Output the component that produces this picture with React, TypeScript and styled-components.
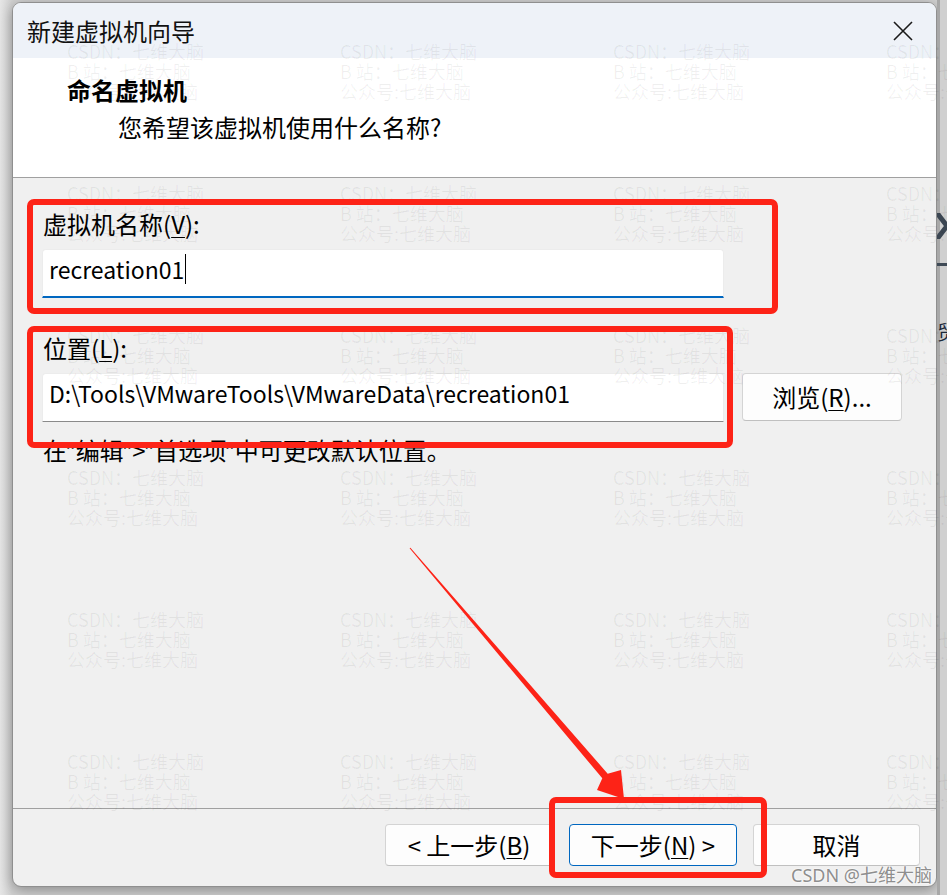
import React from 'react'
import styled, { createGlobalStyle } from 'styled-components'

const GlobalStyle = createGlobalStyle`
  html, body {
    margin: 0;
    padding: 0;
    background: #d6d6d6;
    overflow: hidden;
  }
  * {
    box-sizing: border-box;
  }
`

const FONT = `"Noto Sans CJK SC", "Noto Sans", sans-serif`
const RED = '#fd2317'

const Desktop = styled.div`
  position: relative;
  width: 947px;
  height: 895px;
  display: flex;
  padding: 2px 0 0 12px;
  background: linear-gradient(90deg, #e6e6e6 0px, #d2d2d2 12px);
  font-family: ${FONT};
  color: #000;
  overflow: hidden;
`

const Dialog = styled.div`
  width: 925px;
  height: 885px;
  flex-shrink: 0;
  display: flex;
  flex-direction: column;
  border: 1px solid #8f8f8f;
  border-radius: 9px;
  overflow: hidden;
  background: #f0f0f0;
  box-shadow: 0 3px 14px rgba(0, 0, 0, 0.35);
`

const TitleBar = styled.div`
  height: 55px;
  flex-shrink: 0;
  display: flex;
  align-items: center;
  justify-content: space-between;
  padding: 0 23px 0 14px;
  background: #eef2f8;
`

const TitleText = styled.div`
  font-size: 24px;
  line-height: 30px;
  color: #111;
`

const CloseButton = styled.div`
  width: 20px;
  height: 20px;
  display: flex;
`

const Header = styled.div`
  height: 120px;
  flex-shrink: 0;
  padding: 17px 0 0 54px;
  background: #fff;
  border-bottom: 1px solid #a0a0a0;
`

const HeaderTitle = styled.div`
  font-size: 24px;
  line-height: 30px;
  font-weight: 700;
`

const HeaderSub = styled.div`
  margin: 7px 0 0 51px;
  font-size: 24px;
  line-height: 30px;
`

const Body = styled.div`
  flex: 1;
  padding: 31px 0 0 29px;
  border-bottom: 1px solid #a0a0a0;
`

const FieldLabel = styled.div<{ $gap?: number }>`
  margin-top: ${({ $gap }) => $gap ?? 0}px;
  margin-bottom: 10px;
  font-size: 24px;
  line-height: 30px;
  padding-left: 1px;
`

const Key = styled.span`
  text-decoration: underline;
  text-underline-offset: 3px;
  text-decoration-thickness: 1px;
`

const Quote = styled.span`
  font-family: "Noto Sans", sans-serif;
`

const FieldRow = styled.div`
  display: flex;
  align-items: flex-start;
  gap: 18px;
`

const TextBox = styled.div<{ $focused?: boolean }>`
  width: 682px;
  height: 49px;
  display: flex;
  align-items: flex-start;
  padding: 4px 6px 0;
  background: #fff;
  border: 1px solid #ececec;
  border-bottom: ${({ $focused }) => ($focused ? '2px solid #0067c0' : '1px solid #8a8a8a')};
  border-radius: 4px 4px 0 0;
  font-size: 23px;
  line-height: 30px;
  white-space: nowrap;
`

const Caret = styled.span`
  display: inline-block;
  width: 1px;
  height: 30px;
  margin-left: 1px;
  background: #000;
`

const PushButton = styled.div<{ $primary?: boolean; $width: number; $height: number }>`
  width: ${({ $width }) => $width}px;
  height: ${({ $height }) => $height}px;
  flex-shrink: 0;
  display: flex;
  align-items: center;
  justify-content: center;
  background: #fdfdfd;
  border: 1px solid ${({ $primary }) => ($primary ? '#0067c0' : '#d4d4d4')};
  border-bottom-color: ${({ $primary }) => ($primary ? '#0067c0' : '#c0c0c0')};
  border-radius: 4px;
  font-size: 24px;
  line-height: 30px;
  white-space: pre;
`

const Hint = styled.div`
  margin-top: 13px;
  font-size: 24px;
  line-height: 30px;
  padding-left: 1px;
`

const Footer = styled.div`
  height: 77px;
  flex-shrink: 0;
  display: flex;
  justify-content: flex-end;
  align-items: flex-start;
  gap: 16px;
  padding: 15px 16px 0 0;
`

const BackWindow = styled.div`
  flex: 1;
  min-width: 0;
  overflow: hidden;
  display: flex;
  flex-direction: column;
  align-items: flex-start;
  margin-top: -2px;
  padding-top: 213px;
  background: linear-gradient(90deg, #a8a8a8 0px, #a8a8a8 3px, #d0d0d0 3px);
`

const BackBar = styled.div`
  width: 10px;
  height: 3px;
  margin-top: 24px;
  background: #3f4a56;
`

const BackGlyph = styled.div`
  margin-top: 56px;
  font-size: 20px;
  line-height: 20px;
  color: #1c2a3a;
`

const Watermarks = styled.div`
  position: absolute;
  inset: 0;
  padding: 41px 0 0 67px;
  display: grid;
  grid-template-columns: repeat(4, 273px);
  grid-auto-rows: 142px;
  pointer-events: none;
`

const MarkBlock = styled.div`
  font-size: 18px;
  line-height: 20px;
  color: rgba(0, 0, 0, 0.06);
  white-space: nowrap;
`

const Annotations = styled.svg`
  position: absolute;
  inset: 0;
  pointer-events: none;
`

const Signature = styled.div`
  position: absolute;
  right: 15px;
  bottom: 10px;
  font-size: 18px;
  line-height: 20px;
  color: #8e8e8e;
  text-shadow: 0 0 2px #fff, 0 0 2px #fff;
  font-family: "Noto Sans", "Noto Sans CJK SC", sans-serif;
`

const marks = Array.from({ length: 24 })

export default function App() {
  return (
    <>
      <GlobalStyle />
      <Desktop>
        <Dialog>
          <TitleBar>
            <TitleText>新建虚拟机向导</TitleText>
            <CloseButton>
              <svg width="20" height="20" viewBox="0 0 20 20">
                <path d="M1 1 L19 19 M19 1 L1 19" stroke="#1a1a1a" strokeWidth="1.6" fill="none" />
              </svg>
            </CloseButton>
          </TitleBar>
          <Header>
            <HeaderTitle>命名虚拟机</HeaderTitle>
            <HeaderSub>您希望该虚拟机使用什么名称?</HeaderSub>
          </Header>
          <Body>
            <FieldLabel>
              虚拟机名称(<Key>V</Key>):
            </FieldLabel>
            <TextBox $focused>
              recreation01
              <Caret />
            </TextBox>
            <FieldLabel $gap={35}>
              位置(<Key>L</Key>):
            </FieldLabel>
            <FieldRow>
              <TextBox>D:\Tools\VMwareTools\VMwareData\recreation01</TextBox>
              <PushButton $width={160} $height={48}>
                浏览(<Key>R</Key>)...
              </PushButton>
            </FieldRow>
            <Hint>
              在<Quote>”</Quote>编辑<Quote>”</Quote>&gt;<Quote>”</Quote>首选项<Quote>”</Quote>中可更改默认位置。
            </Hint>
          </Body>
          <Footer>
            <PushButton $width={168} $height={42}>
              {'< 上一步('}
              <Key>B</Key>)
            </PushButton>
            <PushButton $width={168} $height={42} $primary>
              下一步(<Key>N</Key>{') >'}
            </PushButton>
            <PushButton $width={167} $height={42}>
              取消
            </PushButton>
          </Footer>
        </Dialog>
        <BackWindow>
          <svg width="10" height="26" viewBox="0 0 10 26">
            <path d="M0 0 L10 13 L0 26" stroke="#3b4652" strokeWidth="5" fill="none" />
          </svg>
          <BackBar />
          <BackGlyph>贸</BackGlyph>
        </BackWindow>

        <Watermarks>
          {marks.map((_, i) => (
            <MarkBlock key={i}>
              <div>CSDN：七维大脑</div>
              <div>B 站：七维大脑</div>
              <div>公众号:七维大脑</div>
            </MarkBlock>
          ))}
        </Watermarks>

        <Annotations width="947" height="895" viewBox="0 0 947 895">
          <rect x="30" y="202" width="745" height="109" rx="4" fill="none" stroke={RED} strokeWidth="6" />
          <rect x="30" y="329" width="700" height="116" rx="4" fill="none" stroke={RED} strokeWidth="6" />
          <rect x="552" y="800" width="212" height="75" rx="4" fill="none" stroke={RED} strokeWidth="6" />
          <polygon
            points="410.4,547.7 607.7,773.7 621,770 624,799 597,790 602.3,778.3 409.6,548.3"
            fill={RED}
          />
        </Annotations>

        <Signature>CSDN @七维大脑</Signature>
      </Desktop>
    </>
  )
}
